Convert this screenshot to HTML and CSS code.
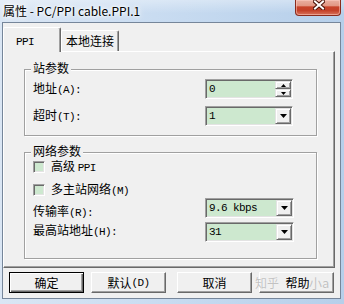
FILE: index.html
```html
<!DOCTYPE html>
<html lang="zh-CN">
<head>
<meta charset="utf-8">
<title>属性 - PC/PPI cable.PPI.1</title>
<link rel="stylesheet" href="styles.css">
</head>
<body>
<div class="window">
  <div class="titlebar">
    <span class="title">属性 - PC/PPI cable.PPI.1</span>
    <div class="close">
      <svg width="12" height="10" viewBox="0 0 12 10">
        <path d="M2 1.5 L10 8.5 M10 1.5 L2 8.5" stroke="#4a1208" stroke-width="4" stroke-linecap="square"/>
        <path d="M2 1.5 L10 8.5 M10 1.5 L2 8.5" stroke="#ffffff" stroke-width="2" stroke-linecap="square"/>
      </svg>
    </div>
  </div>
  <div class="client">
    <div class="tabs">
      <div class="tab active"><span class="m">PPI</span></div>
      <div class="tab">本地连接</div>
    </div>
    <div class="panel">
      <div class="group g1">
        <span class="legend">站参数</span>
        <div class="row">
          <span class="lbl">地址<span class="m">(A):</span></span>
          <div class="field">
            <span class="val m">0</span>
            <div class="updown">
              <div class="ud"><svg width="5" height="3" viewBox="0 0 5 3"><polygon points="2.5,0 5,3 0,3" fill="#000"/></svg></div>
              <div class="ud"><svg width="5" height="3" viewBox="0 0 5 3"><polygon points="0,0 5,0 2.5,3" fill="#000"/></svg></div>
            </div>
          </div>
        </div>
        <div class="row">
          <span class="lbl">超时<span class="m">(T):</span></span>
          <div class="field">
            <span class="val m">1</span>
            <div class="ddbtn"><svg width="7" height="4" viewBox="0 0 7 4"><polygon points="0,0 7,0 3.5,4" fill="#000"/></svg></div>
          </div>
        </div>
      </div>
      <div class="group g2">
        <span class="legend">网络参数</span>
        <div class="cbrow">
          <span class="cb"></span>
          <span class="cblbl">高级 <span class="m">PPI</span></span>
        </div>
        <div class="cbrow">
          <span class="cb"></span>
          <span class="cblbl">多主站网络<span class="m">(M)</span></span>
        </div>
        <div class="row top">
          <span class="lbl lbl-rate">传输率<span class="m">(R):</span></span>
          <div class="field wide">
            <span class="val m">9.6 kbps</span>
            <div class="ddbtn"><svg width="7" height="4" viewBox="0 0 7 4"><polygon points="0,0 7,0 3.5,4" fill="#000"/></svg></div>
          </div>
        </div>
        <div class="row top row-last">
          <span class="lbl lbl-addr">最高站地址<span class="m">(H):</span></span>
          <div class="field wide">
            <span class="val m">31</span>
            <div class="ddbtn"><svg width="7" height="4" viewBox="0 0 7 4"><polygon points="0,0 7,0 3.5,4" fill="#000"/></svg></div>
          </div>
        </div>
      </div>
    </div>
    <div class="buttons">
      <div class="btn default">确定</div>
      <div class="btn b2">默认<span class="m">(D)</span></div>
      <div class="btn b3">取消</div>
      <div class="btn b4"><span class="b4lbl">帮助</span><span class="wm wm-l">知乎</span><span class="wm wm-r">小a</span></div>
    </div>
  </div>
</div>
</body>
</html>
```

FILE: styles.css
```css
* { box-sizing: border-box; }

html, body {
  margin: 0;
  padding: 0;
}

body {
  width: 344px;
  height: 304px;
  overflow: hidden;
  font-family: "Noto Sans CJK SC", "Noto Sans", sans-serif;
  font-size: 12px;
  color: #000;
}

.m {
  font-family: "Liberation Mono", "DejaVu Sans Mono", monospace;
  font-size: 11px;
  letter-spacing: -0.6px;
}

.window {
  width: 344px;
  height: 304px;
  display: flex;
  flex-direction: column;
  background: linear-gradient(to right, #dae6f4 0%, #c9dcf1 45%, #b6cfea 100%);
}

/* title bar */
.titlebar {
  height: 22px;
  display: flex;
  justify-content: space-between;
  align-items: flex-start;
  background: linear-gradient(to bottom, rgba(255,255,255,0.35), rgba(255,255,255,0) 60%);
}

.title {
  margin-left: 3px;
  height: 22px;
  line-height: 22px;
  font-size: 12px;
  color: #000;
  text-shadow: 0 0 5px #fff, 0 0 3px #fff, 0 0 8px #fff;
}

.close {
  width: 46px;
  height: 16px;
  margin-right: 3px;
  display: flex;
  justify-content: center;
  align-items: flex-start;
  padding-left: 2px;
  border: 1px solid #8a2b1c;
  border-top: none;
  border-radius: 0 0 4px 4px;
  background: linear-gradient(to bottom, #eab0a2 0%, #e29683 40%, #c8442b 45%, #c44129 70%, #d8735c 100%);
  box-shadow: inset 0 0 0 1px rgba(255,210,200,0.5);
}

/* client area */
.client {
  margin: 0 3px 5px 2px;
  flex: 1;
  border: 1px solid #76869a;
  background: #f0f0f0;
  display: flex;
  flex-direction: column;
}

/* tabs */
.tabs {
  height: 28px;
  display: flex;
  align-items: flex-end;
  position: relative;
  z-index: 1;
}

.tab {
  width: 58px;
  height: 21px;
  background: #f0f0f0;
  border-top: 1px solid #fff;
  border-left: 1px solid #fff;
  border-right: 1px solid #696969;
  box-shadow: inset -1px 0 0 #a0a0a0;
  border-radius: 2px 2px 0 0;
  line-height: 19px;
  text-align: center;
}

.tab.active {
  height: 25px;
  margin-bottom: -1px;
  text-align: left;
  padding-left: 12px;
  line-height: 23px;
}

/* panel */
.panel {
  width: 332px;
  height: 217px;
  border-top: 1px solid #fff;
  border-left: 1px solid #fff;
  border-right: 1px solid #696969;
  border-bottom: 1px solid #696969;
  box-shadow: inset -1px -1px 0 #a0a0a0;
  padding: 17px 0 0 20px;
}

/* group boxes */
.group {
  position: relative;
  width: 293px;
  border: 1px solid #a0a0a0;
  box-shadow: 1px 1px 0 #fff, inset 1px 1px 0 #fff;
}

.g1 {
  height: 67px;
  padding: 9px 23px 0 8px;
  display: flex;
  flex-direction: column;
  gap: 7px;
}

.g2 {
  height: 107px;
  margin-top: 16px;
  padding: 6px 23px 0 8px;
  display: flex;
  flex-direction: column;
}

.legend {
  position: absolute;
  top: -8px;
  left: 6px;
  padding: 0 2px;
  height: 12px;
  line-height: 12px;
  background: #f0f0f0;
}

.row {
  height: 20px;
  display: flex;
  justify-content: space-between;
  align-items: center;
}

.row.top {
  align-items: flex-start;
}

.lbl {
  line-height: 14px;
}

.lbl-rate { margin-top: 6px; }
.lbl-addr { margin-top: 1px; }

.row-last { margin-top: 4px; }

.cbrow {
  height: 16px;
  display: flex;
  align-items: center;
  gap: 6px;
}

.cbrow + .cbrow { margin-top: 7px; }

.cb {
  width: 12px;
  height: 12px;
  border: 1px solid;
  border-color: #a0a0a0 #fff #fff #a0a0a0;
  box-shadow: inset 1px 1px 0 #696969, inset -1px -1px 0 #e3e3e3;
  background: #cde8cf;
}

.cblbl { line-height: 12px; }

/* fields */
.field {
  width: 88px;
  height: 20px;
  display: flex;
  align-items: stretch;
  border: 1px solid;
  border-color: #a0a0a0 #fff #fff #a0a0a0;
  box-shadow: inset 1px 1px 0 #696969, inset -1px -1px 0 #e3e3e3;
  padding: 1px;
  background: #cde8cf;
}

.field.wide {
  width: 89px;
  margin-right: -1px;
}

.val {
  flex: 1;
  padding-left: 2px;
  line-height: 16px;
}

.ddbtn {
  width: 16px;
  height: 16px;
  display: flex;
  align-items: center;
  justify-content: center;
  background: #f0f0f0;
  border-top: 1px solid #e3e3e3;
  border-left: 1px solid #e3e3e3;
  border-right: 1px solid #696969;
  border-bottom: 1px solid #696969;
  box-shadow: inset 1px 1px 0 #fff, inset -1px -1px 0 #a0a0a0;
}

.updown {
  width: 16px;
  display: flex;
  flex-direction: column;
}

.ud {
  height: 8px;
  display: flex;
  align-items: center;
  justify-content: center;
  background: #f0f0f0;
  border-top: 1px solid #e3e3e3;
  border-left: 1px solid #e3e3e3;
  border-right: 1px solid #696969;
  border-bottom: 1px solid #696969;
  box-shadow: inset 1px 1px 0 #fff, inset -1px -1px 0 #a0a0a0;
}

/* buttons */
.buttons {
  display: flex;
  margin-top: 4px;
  padding-left: 6px;
}

.btn {
  position: relative;
  width: 75px;
  height: 21px;
  display: flex;
  align-items: center;
  justify-content: center;
  background: #f0f0f0;
  border-top: 1px solid #fff;
  border-left: 1px solid #fff;
  border-right: 1px solid #696969;
  border-bottom: 1px solid #696969;
  box-shadow: inset -1px -1px 0 #a0a0a0;
  line-height: 14px;
}

.btn.default {
  border: 1px solid #000;
  box-shadow: inset 1px 1px 0 #fff, inset -1px -1px 0 #696969, inset -2px -2px 0 #a0a0a0;
}

.b2 { margin-left: 7px; }
.b3 { margin-left: 11px; }
.b4 { margin-left: 7px; }

.b4lbl { margin-left: 2px; }

.wm {
  position: absolute;
  top: 2px;
  font-size: 12px;
  line-height: 15px;
  color: #c2c2c2;
  text-shadow: 0 0 1px #fff;
  white-space: nowrap;
}

.wm-l { left: -5px; }
.wm-r { left: 49px; font-size: 13px; }
```
